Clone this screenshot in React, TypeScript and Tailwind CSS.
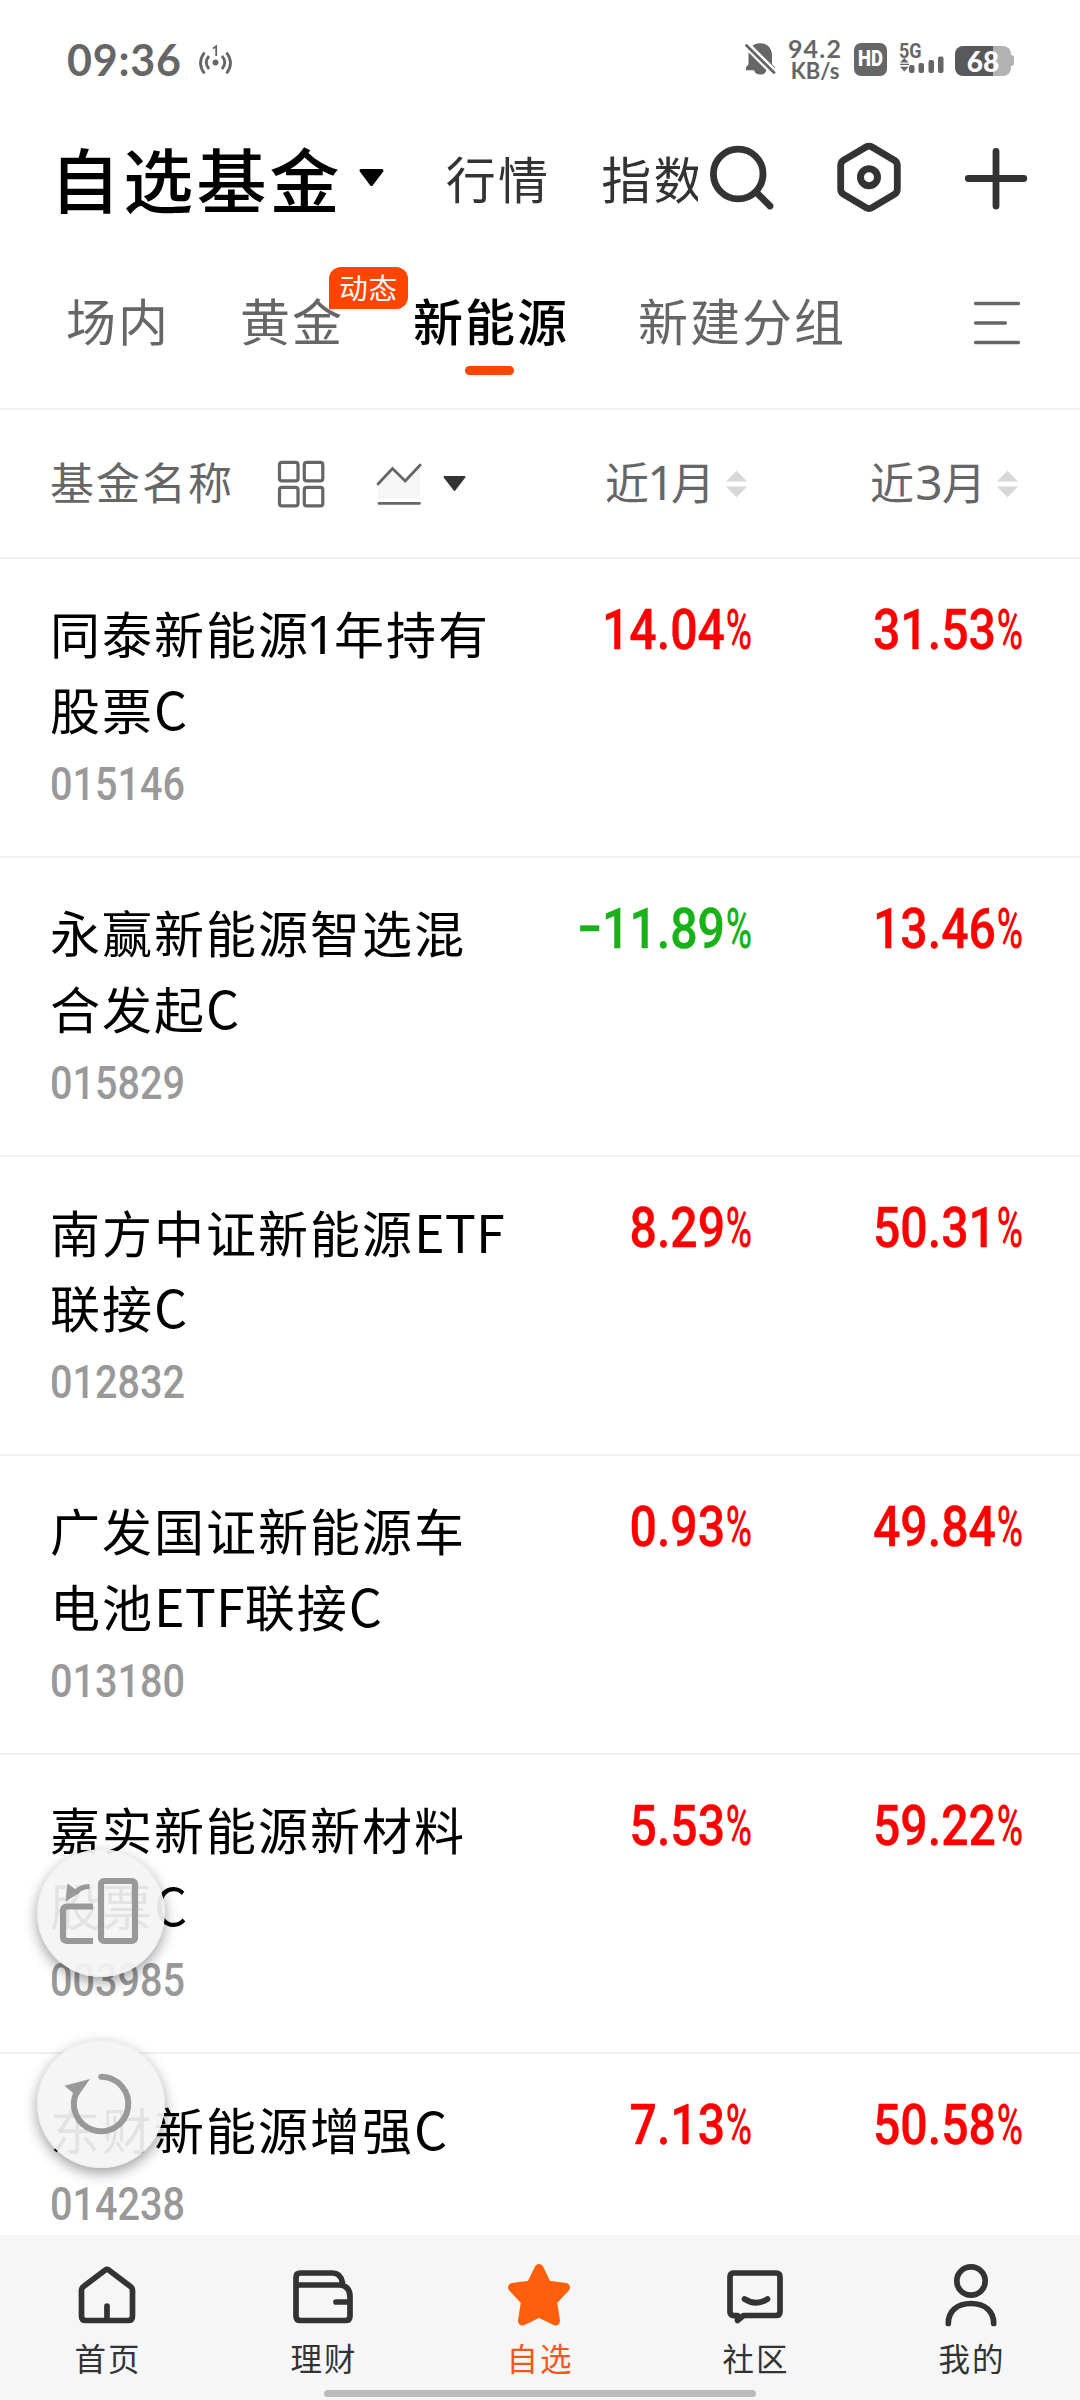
import React from "react";

type Fund = {
  lines: React.ReactNode[];
  code: string;
  month: string;
  quarter: string;
};

const Latin = ({ children }: { children: string }) => (
  <span className="text-[52px] tracking-[0.100px]">{children}</span>
);

const funds: Fund[] = [
  {
    lines: [
      <>
        同泰新能源
        <span className="inline-block w-[24px] font-['Noto_Sans',sans-serif] text-[53px] leading-none tracking-normal">
          <span className="-ml-[4px]">1</span>
        </span>
        年持有
      </>,
      <>
        股票<Latin>C</Latin>
      </>,
    ],
    code: "015146",
    month: "14.04",
    quarter: "31.53",
  },
  {
    lines: [
      "永赢新能源智选混",
      <>
        合发起<Latin>C</Latin>
      </>,
    ],
    code: "015829",
    month: "-11.89",
    quarter: "13.46",
  },
  {
    lines: [
      <>
        南方中证新能源<Latin>ETF</Latin>
      </>,
      <>
        联接<Latin>C</Latin>
      </>,
    ],
    code: "012832",
    month: "8.29",
    quarter: "50.31",
  },
  {
    lines: [
      "广发国证新能源车",
      <>
        电池<Latin>ETF</Latin>联接<Latin>C</Latin>
      </>,
    ],
    code: "013180",
    month: "0.93",
    quarter: "49.84",
  },
  {
    lines: [
      "嘉实新能源新材料",
      <>
        股票<Latin>C</Latin>
      </>,
    ],
    code: "003985",
    month: "5.53",
    quarter: "59.22",
  },
  {
    lines: [
      <>
        东财新能源增强<Latin>C</Latin>
      </>,
    ],
    code: "014238",
    month: "7.13",
    quarter: "50.58",
  },
];

function StatusBar() {
  return (
    <div className="flex h-[118px] shrink-0 items-center pl-[67px] pr-[66px] text-[#666]">
      <span className="font-['Lato',sans-serif] text-[43px] font-bold leading-none tracking-[0.800px]">09:36</span>
      <svg className="ml-[16px] h-[32px] w-[36px]" viewBox="198 44 36 32" fill="none" stroke="#666" strokeWidth="2.8">
        <circle cx="215.5" cy="63.5" r="3" fill="#666" stroke="none" />
        <path d="M209 57q-5.500 6.500 0 13M222 57q5.500 6.500 0 13M204.500 53.500q-8 10.500 0 21M226.500 53.500q8 10.500 0 21" />
        <path d="M213 49.500l3.200-2.200V57" strokeWidth="1.800" />
      </svg>
      <div className="ml-auto flex items-center">
        <svg className="h-[36px] w-[32px]" viewBox="745 41 32 36" fill="#666">
          <path d="M760 43.200c7.500 0 12 5.500 12 12v9l3 3v3h-8.500a6.500 6 0 0 1-12.500 0H746v-3l2.500-3V55c0-6.500 4-11.800 11.500-11.800z" />
          <path d="M745 43.500l31 31" stroke="#fff" strokeWidth="7.500" />
          <path d="M746.500 45.500l27.500 27" stroke="#666" strokeWidth="2.800" strokeLinecap="round" />
        </svg>
        <div className="ml-[11px] flex w-[54px] flex-col items-center font-['Lato',sans-serif] font-bold">
          <span className="text-[25px] leading-[23px] tracking-[1.2px]">94.2</span>
          <span className="text-[22px] leading-[21px]">KB/s</span>
        </div>
        <div className="ml-[12px] flex h-[33px] w-[33px] items-center justify-center rounded-[7px] bg-[#666] font-['Roboto',sans-serif] text-[21.500px] font-black leading-none text-white">
          <span className="scale-x-[0.860]">HD</span>
        </div>
        <div className="relative ml-[12px] h-[34px] w-[46px]">
          <span className="absolute left-0 top-0 origin-left scale-x-[0.9] font-['Roboto',sans-serif] text-[20px] font-bold leading-[18px]">
            5G
          </span>
          <svg className="absolute inset-0" viewBox="899 43 46 34" fill="#666">
            <path d="M900 63.500l4.300-4.500 4.300 4.500zM900 67.800l4.300 4.800 4.300-4.800zM900 64.800h9v1.300h-9z" />
            <rect x="909" y="66" width="5.500" height="8" rx="2" />
            <rect x="918.500" y="64" width="5.500" height="10" rx="2" />
            <rect x="928.500" y="61" width="5.500" height="13" rx="2" />
            <rect x="938" y="57.500" width="5.500" height="16.500" rx="2" />
          </svg>
        </div>
        <div className="ml-[10px] mt-[3px] flex items-center">
          <div className="flex h-[30px] w-[56px] items-center justify-center rounded-[8px] bg-[linear-gradient(to_right,#595959_38px,#b2b2b2_38px)] font-['Lato',sans-serif] text-[28px] font-black leading-none text-white">
            68
          </div>
          <div className="h-[11px] w-[3px] rounded-r-[3px] bg-[#b2b2b2]" />
        </div>
      </div>
    </div>
  );
}

function TitleBar() {
  return (
    <div className="flex h-[118px] shrink-0 items-center pl-[50px] text-[#333]">
      <span className="mt-[2px] text-[70px] font-medium leading-none tracking-[3.200px] text-black">自选基金</span>
      <svg className="ml-[15px] h-[19px] w-[27px]" viewBox="0 0 27 19">
        <path d="M3 2.500h21L13.500 16.500z" fill="#000" stroke="#000" strokeWidth="3" strokeLinejoin="round" />
      </svg>
      <div className="ml-[61px] flex w-[252px] gap-[51px] overflow-hidden whitespace-nowrap text-[50px] leading-[72px] tracking-[2.200px]">
        <span>行情</span>
        <span>指数</span>
      </div>
      <svg className="ml-[9px] h-[72px] w-[72px]" viewBox="708 141 72 72" fill="none" stroke="#333" strokeWidth="6.800" strokeLinecap="round">
        <circle cx="739.200" cy="174" r="24.800" />
        <path d="M757.500 192.500l13.500 13.500" />
      </svg>
      <svg className="ml-[54px] h-[72px] w-[72px]" viewBox="834 141 72 72" fill="none" stroke="#333" strokeWidth="6.800" strokeLinejoin="round">
        <path d="M867 147q3-1.800 6 0l22.300 13.200q3 1.800 3 5.300v23.500q0 3.500-3 5.300L873 207.700q-3 1.800-6 0l-22.300-13.400q-3-1.800-3-5.300v-23.500q0-3.500 3-5.300z" />
        <circle cx="870" cy="177.300" r="8.500" strokeWidth="7" />
      </svg>
      <svg className="ml-[54px] h-[72px] w-[72px]" viewBox="960 141 72 72" stroke="#333" strokeWidth="6.800" strokeLinecap="round">
        <path d="M997 151.500v54.500M969.300 178.500h55.500" />
      </svg>
    </div>
  );
}

function GroupTabs() {
  return (
    <div className="flex h-[174px] shrink-0 items-center border-b-2 border-[#f0f0f0] pb-[6px] pl-[66px] text-[50px] leading-[72px] tracking-[2px] text-[#666]">
      <span className="w-[174px]">场内</span>
      <span className="relative w-[173px]">
        黄金
        <span className="absolute left-[89px] top-[-16px] flex h-[42px] w-[79px] items-center justify-center rounded-[12px] rounded-bl-none bg-[#ff4400] pb-[2px] text-[28.500px] leading-none tracking-[0.800px] text-white">
          动态
        </span>
      </span>
      <span className="relative w-[225px] font-medium text-black">
        新能源
        <span className="absolute left-[52px] top-[83px] h-[9px] w-[49px] rounded-full bg-[#ff4400]" />
      </span>
      <span>新建分组</span>
      <svg className="ml-[126px] mt-[8px] h-[46px] w-[50px]" viewBox="972 298 50 46" stroke="#666" strokeWidth="3.300" strokeLinecap="round">
        <path d="M975.500 301.500h43M975.500 321h30M975.500 340.500h43" />
      </svg>
    </div>
  );
}

function SortArrows() {
  return (
    <svg className="h-[28px] w-[21px]" viewBox="0 0 21 28" fill="#d8d8d8">
      <path d="M0 11.500L10.500 0.500 21 11.500zM0 16.500h21L10.500 27.500z" />
    </svg>
  );
}

function TableHead() {
  return (
    <div className="flex h-[149px] shrink-0 items-center border-b-2 border-[#f0f0f0] pl-[50px] pr-[62px] text-[44px] leading-none tracking-[2px] text-[#666]">
      <span className="-mt-[5px]">基金名称</span>
      <svg className="ml-[43px] h-[48px] w-[48px]" viewBox="277.500 460 48 48" fill="none" stroke="#666" strokeWidth="3.200">
        <rect x="280" y="462.400" width="18.500" height="18.500" rx="2.500" />
        <rect x="304.800" y="462.400" width="18.500" height="18.500" rx="2.500" />
        <rect x="280" y="487.400" width="18.500" height="18.500" rx="2.500" />
        <rect x="304.800" y="487.400" width="18.500" height="18.500" rx="2.500" />
      </svg>
      <svg className="ml-[50px] h-[48px] w-[48px]" viewBox="375.500 460 48 48" fill="none" stroke="#666" strokeWidth="2.800" strokeLinecap="round">
        <path d="M378.500 484l14.500-15.500 12.700 12.500 14.800-15.500V499h-42z" fill="#f6f6f6" stroke="none" />
        <path d="M378.500 484l14.500-15.500 12.700 12.500 15-16M379.500 503.400h40.500" />
      </svg>
      <svg className="ml-[19px] h-[17px] w-[25px]" viewBox="0 0 25 17">
        <path d="M2.500 2h20L12.500 15z" fill="#333" stroke="#333" strokeWidth="2" strokeLinejoin="round" />
      </svg>
      <div className="ml-auto flex items-center">
        <span className="-mt-[4px] flex items-baseline">
          近
          <span className="flex w-[20px] justify-center font-['Noto_Sans',sans-serif] text-[48px] leading-none tracking-normal">1</span>
          月
        </span>
        <span className="ml-[9px] flex">
          <SortArrows />
        </span>
      </div>
      <div className="ml-[123px] flex items-center">
        <span className="-mt-[4px] flex items-baseline">
          近
          <span className="flex w-[26px] justify-center font-['Noto_Sans',sans-serif] text-[48px] leading-none tracking-normal">3</span>
          月
        </span>
        <span className="ml-[9px] flex">
          <SortArrows />
        </span>
      </div>
    </div>
  );
}

function Percent({ value, className }: { value: string; className: string }) {
  const negative = value.startsWith("-");
  return (
    <div
      className={`flex justify-end font-['Roboto',sans-serif] text-[56px] font-medium leading-[60px] ${className} ${
        negative ? "text-[#18b218]" : "text-[#fd0000]"
      }`}
    >
      <span className="origin-right scale-x-[0.860] [-webkit-text-stroke:0.400px]">
        {negative && <span className="inline-block origin-right -translate-y-[3px] scale-x-[1.500]">-</span>}
        {value.replace("-", "")}
      </span>
      <span className="flex w-[27px] justify-end">
        <span className="origin-right scale-x-[0.640] font-medium">%</span>
      </span>
    </div>
  );
}

function FundRow({ fund }: { fund: Fund }) {
  return (
    <div className="flex h-[299px] shrink-0 border-b-2 border-[#f0f0f0] pl-[50px]">
      <div className="w-[480px] pt-[36px]">
        {fund.lines.map((line, i) => (
          <div key={i} className="h-[75px] whitespace-nowrap text-[50px] leading-[75px] tracking-[2px] text-black">
            {line}
          </div>
        ))}
        <div className="mt-[3px] origin-left scale-x-[0.870] font-['Roboto',sans-serif] text-[45.500px] font-medium leading-[73px] text-[#999]">
          {fund.code}
        </div>
      </div>
      <Percent value={fund.month} className="w-[222px] pt-[41px]" />
      <Percent value={fund.quarter} className="w-[271px] pt-[41px]" />
    </div>
  );
}

function NavItem({ label, active, children }: { label: string; active?: boolean; children: React.ReactNode }) {
  return (
    <div className="flex flex-1 flex-col items-center pt-[24px]">
      <svg
        className="h-[72px] w-[72px]"
        viewBox="0 0 72 72"
        fill="none"
        stroke="#333"
        strokeWidth="5.700"
        strokeLinecap="round"
        strokeLinejoin="round"
      >
        {children}
      </svg>
      <span className={`mt-[9px] text-[31.500px] leading-[34px] tracking-[2px] ${active ? "text-[#ee5a1c]" : "text-[#333]"}`}>
        {label}
      </span>
    </div>
  );
}

function BottomNav() {
  return (
    <div className="relative flex h-[165px] shrink-0 bg-[#f6f6f6]">
      <NavItem label="首页">
        <path d="M33 11.200q2-1.500 4 0L58.500 27.500q2 1.600 2 4V57q0 4.500-4.500 4.500H14Q9.500 61.500 9.500 57V31.500q0-2.400 2-4zM35 47V60" />
      </NavItem>
      <NavItem label="理财">
        <path d="M8 26V18.500q0-4.500 4.500-4.500h32q8 0 10 9.500M8 26h44q10 1 10 12v19q0 4.500-4.500 4.500h-45Q8 61.500 8 57zM61 43H48" />
      </NavItem>
      <NavItem label="自选" active>
        <path
          d="M35 9.500l8 16.500 18.500 2.500-13 14 3 19.500L35 54l-16.500 8 3-19.500-13-14L27 26z"
          fill="#ff5f0c"
          stroke="#ff5f0c"
          strokeWidth="9"
        />
      </NavItem>
      <NavItem label="社区">
        <path d="M12.500 14h43.500q4 0 4 4v34.500q0 4-4 4H23.500L17.500 61.500V56.500h-1q-6.500 1-6.500-4V18q0-4 4-4M24.500 40q11.500 7.500 23 0" />
      </NavItem>
      <NavItem label="我的">
        <circle cx="35" cy="22" r="14.200" />
        <path d="M12.300 64.500C12.300 52 21 44.500 35 44.500S57.700 52 57.700 64.500" />
      </NavItem>
      <div className="absolute bottom-[3px] left-[324px] h-[7px] w-[432px] rounded-full bg-[#bbb]" />
    </div>
  );
}

function FloatingButtons() {
  const base =
    "flex h-[128px] w-[128px] items-center justify-center rounded-full border border-[#ededed] bg-[#f4f4f4]/93 shadow-[0_5px_14px_rgba(0,0,0,0.38)]";
  return (
    <div className="absolute left-[37px] top-[1849px] flex flex-col gap-[63px]">
      <button className={base}>
        <svg className="h-[128px] w-[128px] shrink-0" viewBox="37 1849 128 128" fill="none" stroke="#999" strokeWidth="6.200">
          <rect x="101" y="1881" width="34" height="60" rx="3" />
          <path d="M93 1906.500H67.500q-4.500 0-4.500 4.500v25.500q0 4.500 4.500 4.500H93" />
          <path d="M89.500 1886.500q-9 0-14.500 6.500" strokeWidth="5" />
          <path d="M67.500 1883.500l12.500 9-14.500 9z" fill="#999" stroke="none" />
        </svg>
      </button>
      <button className={base}>
        <svg className="h-[128px] w-[128px] shrink-0" viewBox="37 2040 128 128" fill="none" stroke="#999" strokeWidth="6">
          <path d="M101.300 2076.800a27.200 27.200 0 1 1-24.500 15" strokeLinecap="round" />
          <path d="M90 2079l-25.500 6.700 10 8.500 3.500 2z" fill="#999" stroke="none" />
        </svg>
      </button>
    </div>
  );
}

export default function App() {
  return (
    <div className="relative flex h-[2400px] w-[1080px] flex-col overflow-hidden bg-white font-['Noto_Sans_CJK_SC',sans-serif]">
      <StatusBar />
      <TitleBar />
      <GroupTabs />
      <TableHead />
      <div className="flex h-0 flex-1 flex-col overflow-hidden">
        {funds.map((fund) => (
          <FundRow key={fund.code} fund={fund} />
        ))}
      </div>
      <BottomNav />
      <FloatingButtons />
    </div>
  );
}
